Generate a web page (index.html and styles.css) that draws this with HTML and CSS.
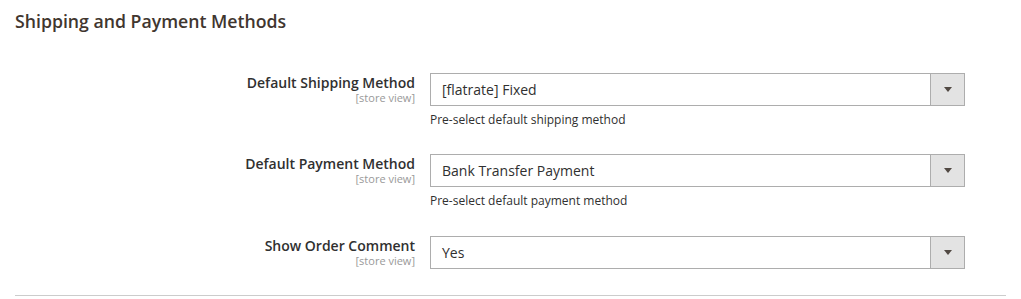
FILE: index.html
```html
<!DOCTYPE html>
<html>
<head>
<meta charset="utf-8">
<link rel="stylesheet" href="styles.css">
</head>
<body>
<div class="section">
  <h2 class="title">Shipping and Payment Methods</h2>
  <div class="fields">
    <div class="field">
      <div class="label"><span class="label-text">Default Shipping Method</span><span class="scope">[store view]</span></div>
      <div class="control">
        <div class="select"><span class="value">[flatrate] Fixed</span><span class="arrow"></span></div>
        <div class="note">Pre-select default shipping method</div>
      </div>
    </div>
    <div class="field">
      <div class="label"><span class="label-text">Default Payment Method</span><span class="scope">[store view]</span></div>
      <div class="control">
        <div class="select"><span class="value">Bank Transfer Payment</span><span class="arrow"></span></div>
        <div class="note">Pre-select default payment method</div>
      </div>
    </div>
    <div class="field field-last">
      <div class="label"><span class="label-text">Show Order Comment</span><span class="scope">[store view]</span></div>
      <div class="control">
        <div class="select"><span class="value">Yes</span><span class="arrow"></span></div>
      </div>
    </div>
  </div>
  <div class="divider"></div>
</div>
</body>
</html>
```
FILE: styles.css
```css
html, body {
  margin: 0;
  padding: 0;
  background: #fff;
}
body {
  font-family: "Open Sans", "Liberation Sans", sans-serif;
  color: #303030;
}
.section {
  padding: 0 15px;
}
.title {
  margin: 0;
  padding-top: 9px;
  font-size: 17.7px;
  line-height: 24px;
  font-weight: 600;
  color: #41362f;
}
.fields {
  display: flex;
  flex-direction: column;
  gap: 25px;
  padding-top: 40px;
}
.field {
  display: grid;
  grid-template-columns: 400px 535px;
  column-gap: 15px;
}
.field-last {
  margin-top: 1px;
}
.label {
  display: flex;
  flex-direction: column;
  align-items: flex-end;
  padding-top: 1px;
}
.label-text {
  font-size: 14px;
  font-weight: 600;
  line-height: 18px;
  color: #303030;
}
.scope {
  font-size: 11px;
  line-height: 12px;
  color: #999;
}
.control {
  display: flex;
  flex-direction: column;
}
.select {
  height: 33px;
  box-sizing: border-box;
  border: 1px solid #adadad;
  display: flex;
  align-items: center;
  background: #fff;
}
.value {
  flex: 1;
  padding-left: 11px;
  font-size: 14px;
  color: #303030;
}
.arrow {
  width: 34px;
  height: 100%;
  box-sizing: border-box;
  border-left: 1px solid #adadad;
  background: #e3e3e3;
  display: flex;
  align-items: center;
  justify-content: center;
}
.arrow::after {
  content: "";
  width: 0;
  height: 0;
  border-left: 4px solid transparent;
  border-right: 4px solid transparent;
  border-top: 5px solid #514943;
}
.note {
  margin-top: 5px;
  font-size: 12px;
  line-height: 18px;
  color: #303030;
}
.divider {
  margin-top: 26px;
  height: 1px;
  background: #cccccc;
}
```
